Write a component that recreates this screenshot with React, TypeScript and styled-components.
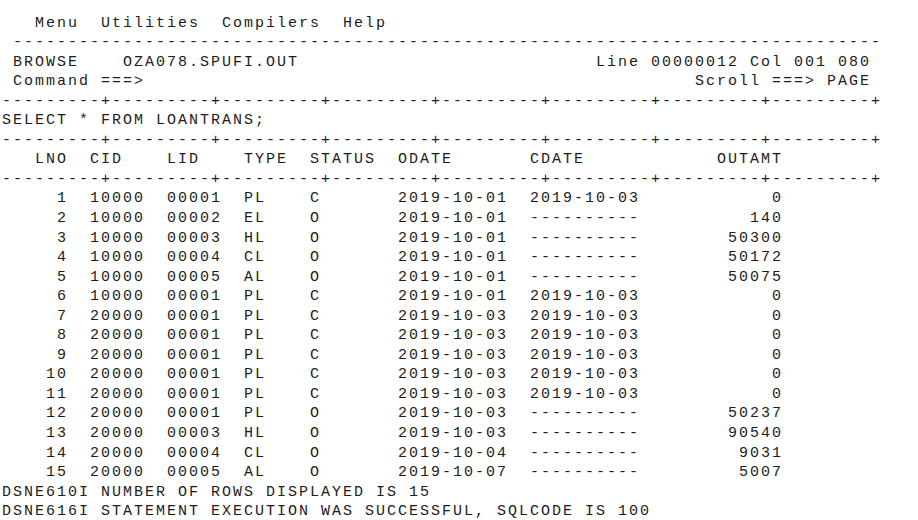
import React from "react";
import styled, { createGlobalStyle } from "styled-components";

const GlobalStyle = createGlobalStyle`
  html, body {
    margin: 0;
    padding: 0;
    background: #ffffff;
  }
`;

const Screen = styled.main`
  display: flex;
  flex-direction: column;
  padding: 13.5px 0 0 2px;
  font-family: "Liberation Mono", "DejaVu Sans Mono", monospace;
  font-size: 15px;
  letter-spacing: 2px;
  line-height: 19.56px;
  color: #1c1c1c;
`;

const Line = styled.div`
  white-space: pre;
  height: 19.56px;
`;

const MenuBar = styled(Line)`
  display: flex;
`;

const MenuItem = styled.span`
  white-space: pre;
`;

const Ruler = styled(Line)``;

const SqlText = styled(Line)``;

const ColumnHeader = styled(Line)``;

const DataRow = styled(Line)``;

const Message = styled(Line)``;

const Split = styled(Line)`
  display: flex;
  justify-content: space-between;
  width: 869px;
`;

const Field = styled.span`
  white-space: pre;
`;

type Row = {
  lno: number;
  cid: string;
  lid: string;
  type: string;
  status: string;
  odate: string;
  cdate: string | null;
  amt: number;
};

const rows: Row[] = [
  { lno: 1, cid: "10000", lid: "00001", type: "PL", status: "C", odate: "2019-10-01", cdate: "2019-10-03", amt: 0 },
  { lno: 2, cid: "10000", lid: "00002", type: "EL", status: "O", odate: "2019-10-01", cdate: null, amt: 140 },
  { lno: 3, cid: "10000", lid: "00003", type: "HL", status: "O", odate: "2019-10-01", cdate: null, amt: 50300 },
  { lno: 4, cid: "10000", lid: "00004", type: "CL", status: "O", odate: "2019-10-01", cdate: null, amt: 50172 },
  { lno: 5, cid: "10000", lid: "00005", type: "AL", status: "O", odate: "2019-10-01", cdate: null, amt: 50075 },
  { lno: 6, cid: "10000", lid: "00001", type: "PL", status: "C", odate: "2019-10-01", cdate: "2019-10-03", amt: 0 },
  { lno: 7, cid: "20000", lid: "00001", type: "PL", status: "C", odate: "2019-10-03", cdate: "2019-10-03", amt: 0 },
  { lno: 8, cid: "20000", lid: "00001", type: "PL", status: "C", odate: "2019-10-03", cdate: "2019-10-03", amt: 0 },
  { lno: 9, cid: "20000", lid: "00001", type: "PL", status: "C", odate: "2019-10-03", cdate: "2019-10-03", amt: 0 },
  { lno: 10, cid: "20000", lid: "00001", type: "PL", status: "C", odate: "2019-10-03", cdate: "2019-10-03", amt: 0 },
  { lno: 11, cid: "20000", lid: "00001", type: "PL", status: "C", odate: "2019-10-03", cdate: "2019-10-03", amt: 0 },
  { lno: 12, cid: "20000", lid: "00001", type: "PL", status: "O", odate: "2019-10-03", cdate: null, amt: 50237 },
  { lno: 13, cid: "20000", lid: "00003", type: "HL", status: "O", odate: "2019-10-03", cdate: null, amt: 90540 },
  { lno: 14, cid: "20000", lid: "00004", type: "CL", status: "O", odate: "2019-10-04", cdate: null, amt: 9031 },
  { lno: 15, cid: "20000", lid: "00005", type: "AL", status: "O", odate: "2019-10-07", cdate: null, amt: 5007 },
];

const ruler = "---------+".repeat(8);

const formatRow = (r: Row) =>
  String(r.lno).padStart(6) +
  "  " +
  r.cid +
  "  " +
  r.lid +
  "  " +
  r.type.padEnd(6) +
  r.status.padEnd(8) +
  r.odate +
  "  " +
  (r.cdate ?? "----------") +
  String(r.amt).padStart(13);

export default function App() {
  return (
    <>
      <GlobalStyle />
      <Screen>
        <MenuBar>
          <MenuItem>{"   Menu  "}</MenuItem>
          <MenuItem>{"Utilities  "}</MenuItem>
          <MenuItem>{"Compilers  "}</MenuItem>
          <MenuItem>{"Help"}</MenuItem>
        </MenuBar>
        <Ruler>{" " + "-".repeat(79)}</Ruler>
        <Split>
          <Field>{" BROWSE    OZA078.SPUFI.OUT"}</Field>
          <Field>{"Line 00000012 Col 001 080"}</Field>
        </Split>
        <Split>
          <Field>{" Command ===>"}</Field>
          <Field>{"Scroll ===> PAGE"}</Field>
        </Split>
        <Ruler>{ruler}</Ruler>
        <SqlText>SELECT * FROM LOANTRANS;</SqlText>
        <Ruler>{ruler}</Ruler>
        <ColumnHeader>{"   LNO  CID    LID    TYPE  STATUS  ODATE       CDATE            OUTAMT"}</ColumnHeader>
        <Ruler>{ruler}</Ruler>
        {rows.map((r) => (
          <DataRow key={r.lno}>{formatRow(r)}</DataRow>
        ))}
        <Message>DSNE610I NUMBER OF ROWS DISPLAYED IS 15</Message>
        <Message>DSNE616I STATEMENT EXECUTION WAS SUCCESSFUL, SQLCODE IS 100</Message>
      </Screen>
    </>
  );
}
